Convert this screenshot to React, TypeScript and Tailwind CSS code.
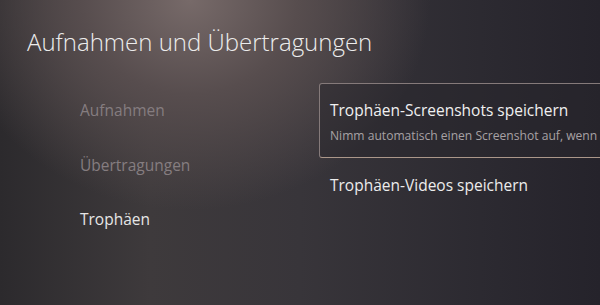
export default function App() {
  const menu = [
    { label: 'Aufnahmen', active: false },
    { label: 'Übertragungen', active: false },
    { label: 'Trophäen', active: true },
  ];

  return (
    <div
      className="w-[600px] h-[305px] overflow-hidden text-white bg-[radial-gradient(ellipse_240px_210px_at_190px_0px,#776a69_0%,#574d4e_45%,transparent_100%),linear-gradient(90deg,#2c2a2d_0%,#3e3a3c_25%,#38353a_50%,#2c2a31_80%,#25232b_100%)]"
      style={{ fontFamily: '"Open Sans", "Noto Sans", sans-serif' }}
    >
      <h1 className="pl-[27px] pt-[26px] text-[24px] font-light leading-[32px] text-[#ececec]">
        Aufnahmen und Übertragungen
      </h1>

      <div className="flex mt-[25px]">
        <ul className="w-[319px] shrink-0 pl-[80px] pt-[15px] flex flex-col gap-[30.5px]">
          {menu.map(m => (
            <li
              key={m.label}
              className={`text-[15.5px] leading-[24px] ${m.active ? 'text-[#e6e6e6]' : 'text-[#857d80]'}`}
            >
              {m.label}
            </li>
          ))}
        </ul>

        <div className="flex-1 min-w-0 flex flex-col">
          <div className="mr-[-20px] h-[75px] rounded-[3px] border border-[#857a7a] border-b-[#ab978a] bg-[#28252b]/50 pl-[10px] pt-[15px] whitespace-nowrap">
            <div className="text-[15.5px] leading-[22px] text-[#f0f0f0]">Trophäen-Screenshots speichern</div>
            <div className="mt-[6px] text-[12.1px] leading-[18px] text-[#a7a1a4]">
              Nimm automatisch einen Screenshot auf, wenn
            </div>
          </div>
          <div className="pl-[11px] pt-[16px] text-[15.5px] leading-[22px] text-[#ececec] whitespace-nowrap">
            Trophäen-Videos speichern
          </div>
        </div>
      </div>
    </div>
  );
}
